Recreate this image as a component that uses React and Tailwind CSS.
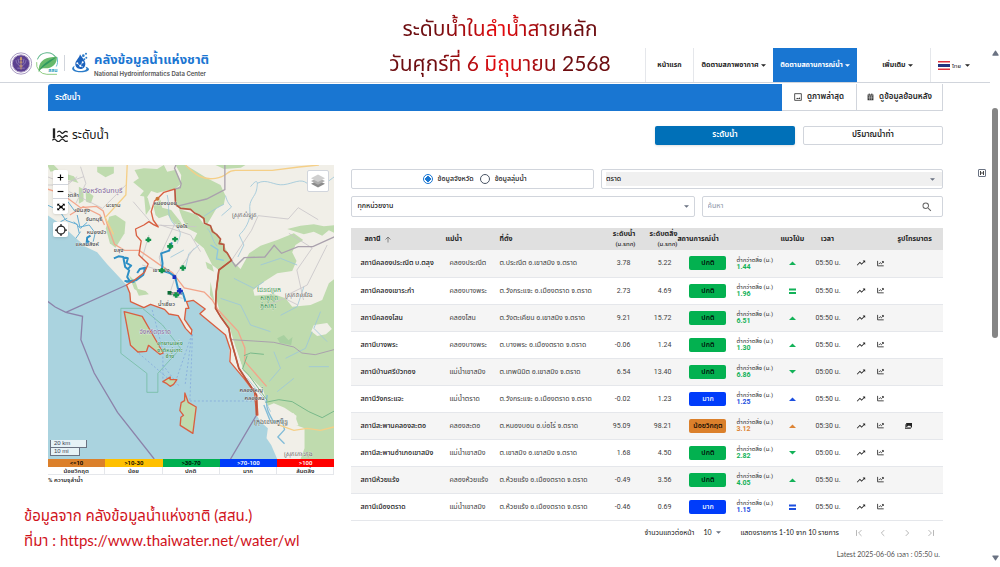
import { useState } from "react";

const stations = [
  { name: "สถานีคลองประณีต บ.ตลุง", river: "คลองประณีต", place: "ต.ประณีต อ.เขาสมิง จ.ตราด", level: "3.78", bank: "5.22", status: "ปกติ", diff: "1.44", trend: "up", time: "05:50" },
  { name: "สถานีคลองเขาระกำ", river: "คลองบางพระ", place: "ต.วังกระแจะ อ.เมืองตราด จ.ตราด", level: "2.73", bank: "4.69", status: "ปกติ", diff: "1.96", trend: "same", time: "05:50" },
  { name: "สถานีคลองโสน", river: "คลองโสน", place: "ต.วังตะเคียน อ.เขาสมิง จ.ตราด", level: "9.21", bank: "15.72", status: "ปกติ", diff: "6.51", trend: "up", time: "05:50" },
  { name: "สถานีบางพระ", river: "คลองบางพระ", place: "ต.บางพระ อ.เมืองตราด จ.ตราด", level: "-0.06", bank: "1.24", status: "ปกติ", diff: "1.30", trend: "up", time: "05:50" },
  { name: "สถานีบ้านศรีบัวทอง", river: "แม่น้ำเขาสมิง", place: "ต.เทพนิมิต อ.เขาสมิง จ.ตราด", level: "6.54", bank: "13.40", status: "ปกติ", diff: "6.86", trend: "down", time: "05:00" },
  { name: "สถานีวังกระแจะ", river: "แม่น้ำตราด", place: "ต.วังกระแจะ อ.เมืองตราด จ.ตราด", level: "-0.02", bank: "1.23", status: "มาก", diff: "1.25", trend: "up", time: "05:50" },
  { name: "สถานีสะพานคลองสะตอ", river: "คลองสะตอ", place: "ต.หนองบอน อ.บ่อไร่ จ.ตราด", level: "95.09", bank: "98.21", status: "น้อยวิกฤต", diff: "3.12", trend: "up", time: "05:30", photo: true },
  { name: "สถานีสะพานอำเภอเขาสมิง", river: "แม่น้ำเขาสมิง", place: "ต.เขาสมิง อ.เขาสมิง จ.ตราด", level: "1.68", bank: "4.50", status: "ปกติ", diff: "2.82", trend: "down", time: "05:00" },
  { name: "สถานีห้วยแร้ง", river: "คลองห้วยแร้ง", place: "ต.ห้วยแร้ง อ.เมืองตราด จ.ตราด", level: "-0.49", bank: "3.56", status: "ปกติ", diff: "4.05", trend: "up", time: "05:50" },
  { name: "สถานีเมืองตราด", river: "แม่น้ำเขาสมิง", place: "ต.ห้วยแร้ง อ.เมืองตราด จ.ตราด", level: "-0.46", bank: "0.69", status: "มาก", diff: "1.15", trend: "same", time: "05:50" },
];

const statusStyles = {
  "ปกติ": { badge: "bg-[#03b150] text-black", text: "text-[#13b258]" },
  "มาก": { badge: "bg-[#003cfa] text-white", text: "text-[#1c4fe0]" },
  "น้อยวิกฤต": { badge: "bg-[#db802b] text-black", text: "text-[#dd8434]" },
};

const legend = [
  { range: "<=10", label: "น้อยวิกฤต", color: "bg-[#db802b] text-black" },
  { range: ">10-30", label: "น้อย", color: "bg-[#ffc000] text-black" },
  { range: ">30-70", label: "ปกติ", color: "bg-[#00b050] text-black" },
  { range: ">70-100", label: "มาก", color: "bg-[#003cfa] text-white" },
  { range: ">100", label: "ล้นตลิ่ง", color: "bg-[#ff0000] text-white" },
];

function Caret({ className = "" }) {
  return (
    <svg viewBox="0 0 10 5" className={`w-[5px] h-[3px] shrink-0 ${className}`} fill="currentColor" aria-hidden="true">
      <path d="M0 0h10L5 5z" />
    </svg>
  );
}

function ScrollArrow({ className = "" }) {
  return (
    <svg viewBox="0 0 8 6" className={`w-[7px] h-[6px] ${className}`} fill="currentColor" aria-hidden="true">
      <path d="M1 0h6q1 0 .5 1L4.500 5.500q-.5.5-1 0L.5 1Q0 0 1 0z" />
    </svg>
  );
}

function Logos() {
  return (
    <div className="flex items-center gap-1">
      <svg viewBox="0 0 66 68" className="w-[22px] h-[23px]" aria-hidden="true">
        <circle cx="33" cy="34" r="32" fill="#fff" stroke="#7d6aa5" strokeWidth="2" />
        <circle cx="33" cy="34" r="26" fill="#5b4090" stroke="#b9a8cc" strokeWidth="3" />
        <path d="M18 24c2 12 8 16 15 17 7-1 13-5 15-17M24 20l3 14M42 20l-3 14M22 48h22" fill="none" stroke="#8d79b8" strokeWidth="3" />
        <path d="M33 14v38M29 30h8M28 42h10M30 22l3-7 3 7z" fill="none" stroke="#c99a6c" strokeWidth="3" />
      </svg>
      <svg viewBox="0 0 68 68" className="w-[23px] h-[23px]" aria-hidden="true">
        <path d="M60 18A31 31 0 0 0 4 22" fill="none" stroke="#5db58a" strokeWidth="3" />
        <path d="M2 30a31 31 0 0 0 30 36h30" fill="none" stroke="#7cc46c" strokeWidth="2.5" />
        <path d="M62 15c3 12 2 20-2 28" fill="none" stroke="#4fb0c4" strokeWidth="2.5" />
        <path d="M8 50C10 24 30 14 62 14c0 26-18 36-40 34C16 48 12 50 8 60z" fill="#67b96b" />
        <path d="M8 58C16 40 32 26 60 15 40 34 24 38 8 58z" fill="#2f9860" />
        <text x="36" y="59" className="text-[15px] font-bold" fill="#2c9fc0">สสน</text>
      </svg>
      <span className="h-4 ml-px border-l border-gray-300" />
      <svg viewBox="0 0 60 64" className="w-5 h-[22px] ml-px" aria-hidden="true">
        <path d="M14 40C3 46 4 54 18 58c16 4 38 2 39-7 0-4-5-7-11-8 10 8-4 13-15 13-14 0-23-6-17-16z" fill="#2b7cc9" />
        <path d="M30 6c4 8 16 18 16 29 0 9-7 15-15 15s-15-6-15-14C16 24 28 18 30 6z" fill="#1c62bd" />
        <path d="M22 33l8 7 8-9M30 40l9 4" fill="none" stroke="#fff" strokeWidth="2" />
        <g fill="#fff">
          <circle cx="22" cy="33" r="3" />
          <circle cx="38" cy="30" r="3" />
          <circle cx="31" cy="41" r="3" />
        </g>
        <g fill="#2b7cc9">
          <circle cx="40" cy="10" r="4" />
          <circle cx="49" cy="16" r="3" />
          <circle cx="48" cy="4" r="3" />
          <circle cx="43" cy="21" r="3" />
        </g>
      </svg>
    </div>
  );
}

function Header() {
  return (
    <header className="grid grid-cols-[1fr_auto_1fr] items-end pl-[10px] border-b border-gray-300">
      <a href="#home" className="flex items-center gap-1 h-[38px]">
        <Logos />
        <span className="flex flex-col pt-1 gap-px">
          <span className="text-[13px] leading-4 font-bold text-[#1b76d2] whitespace-nowrap">คลังข้อมูลน้ำแห่งชาติ</span>
          <span className="font-['Inter',sans-serif] text-[6px] leading-[9px] font-semibold text-neutral-600 whitespace-nowrap">National Hydroinformatics Data Center</span>
        </span>
      </a>
      <h1 className="pt-[10px] pb-[2px] text-center font-['Lato','Noto_Sans_Thai',sans-serif] text-[21px] leading-[35px] whitespace-nowrap">
        <span className="block bg-[linear-gradient(90deg,#6d0d10_20%,#e80a0e_50%,#6d0d10_80%)] bg-clip-text text-transparent">ระดับน้ำในลำน้ำสายหลัก</span>
        <span className="block bg-[linear-gradient(90deg,#6d0d10_20%,#e80a0e_50%,#6d0d10_80%)] bg-clip-text text-transparent">วันศุกร์ที่ 6 มิถุนายน 2568</span>
      </h1>
      <nav className="flex justify-end h-[34px] pr-3 text-[7px] font-bold text-neutral-800 whitespace-nowrap">
        <a href="#home" className="flex items-center justify-center w-12 border-l border-gray-200">หน้าแรก</a>
        <button className="flex items-center justify-center gap-[2px] w-20 border-l border-gray-200">ติดตามสภาพอากาศ <Caret /></button>
        <button className="flex items-center justify-center gap-[2px] w-[84px] bg-[#1976d2] text-white">ติดตามสถานการณ์น้ำ <Caret /></button>
        <button className="flex items-center justify-center gap-[2px] w-[73px] pl-2">เพิ่มเติม <Caret /></button>
        <button className="flex items-center gap-[2px] w-12 pl-[7px] border-l border-gray-200 text-[6px] font-normal">
          <svg viewBox="0 0 12 9" className="w-3 h-[9px]" aria-hidden="true">
            <path d="M0 0h12v9H0z" fill="#e0313c" />
            <path d="M0 1.500h12v6H0z" fill="#fff" />
            <path d="M0 3h12v3H0z" fill="#24327f" />
          </svg>
          ไทย
          <Caret className="ml-[2px]" />
        </button>
      </nav>
    </header>
  );
}

const land = "M0 150L30 170 70 205 115 245 150 262 180 298 215 335 238 360 248 385 250 410 290 428 310 418 352 433 365 447 393 452 415 490 432 508 434 495 412 463 416 430 425 430 418 410 438 406 474 432 458 446 535 510 550 555 548 590 622 682 628 750 640 770 662 790 658 820 672 840 690 882H864V0H0Z";
const border = "M383 72L350 82 332 100 322 108 312 140 318 165 333 186 318 178 305 170 290 180 265 192 268 212 282 228 275 270 303 297 292 322 262 345 238 360 248 385 250 410 290 428 310 418 352 433 365 447 393 452 415 490 432 508 434 495 412 463 416 430 425 430 418 410 438 406 474 432 458 446 535 510 550 555 548 590 590 640 622 682 628 750 632 750 628 690 575 610 550 520 545 490 520 455 505 430 507 380 515 315 553 286";
const eastBorder = "M383 72L385 118 400 130 430 133 442 144 455 150 470 160 472 175 490 182 496 200 508 208 520 222 516 236 530 238 530 256 540 264 553 286 515 315 507 380 505 430 520 455 545 490 550 520 575 610 628 690V750";

function RiverMap() {
  return (
    <svg viewBox="0 0 864 882" preserveAspectRatio="xMidYMid slice" className="block w-full h-[294px]" role="img" aria-label="แผนที่จังหวัดตราด">
      <path d="M0 0H864V882H0z" fill="#aad3df" />
      <path d={land} fill="#f1efe8" />
      <g fill="#bfdbae">
        <path d="M262 15L275 40 258 52 290 78 278 92 300 96 312 78 330 84 352 78 383 72 402 56 386 14 360 20 350 0 330 12 290 10z" />
        <path d="M385 0L402 30 400 60 385 75V118L400 130 430 133 455 150 480 178 508 130 530 118 535 92 520 60 480 40 440 15 415 0z" />
        <path d="M395 132L450 150 470 178 490 182 530 240 553 286 515 315 495 300 470 250 440 225 450 205 420 190 405 160z" />
        <path d="M186 155L205 150 235 170 232 205 205 248 188 235 176 190z" />
        <path d="M515 315L553 286 580 312 606 265 640 242 690 225 740 205 768 225 745 240 735 262 748 288 735 318 690 325 650 350 618 375 622 392 680 388 715 400 735 425 790 420 825 405 845 355 864 340V882H760L772 850 772 790 745 780 748 752 712 728 680 715 655 725 640 680 590 620 565 545 548 490 520 450 507 400z" />
        <path d="M864 180L830 184 800 178 760 182 720 192 770 208 800 200 825 212 845 196 864 205z" />
        <path d="M318 120L340 104 345 128 372 135 400 170 410 190 380 175 362 150 335 160 325 150z" />
        <path d="M150 5h50v20l-25 12-25-16zM95 65l14 8v35l-14 8zM115 75l24 18-8 22-14-5zM290 85l12 15 8 30-14 20zM0 0h20l14 14-24 6zM40 22l40 12 14 20-20-6-30-8zM245 330l20 20 10 30-14-8zM265 370l30 8 10 10-30 4zM490 350l12 60-14-20zM475 290l20 10 5 20-20-10z" />
        <path d="M505 0h90l-14 8-50 4z" />
      </g>
      <g fill="#f1efe8">
        <path d="M800 480l40-6 14 18-18 16-26 5-18-14zM548 525l20 30 20 60 60 60 12 40 5 40-34-6-10-70-75-95z" />
        <path d="M700 750l40-5 14 36-34 8z" />
      </g>
      <path d="M690 520l20-10 14 16 12-10-4 24-34-6z" fill="#a8d0a0" />

      {/* minor rivers and roads */}
      <g fill="none" stroke="#9cc7da" strokeWidth="2.500">
        <path d="M530 118c-30 15-50 30-60 36M535 92c5 20 12 26 18 34l-30 26M610 65c24-30 22-10 18 10s-24 30-20 60-15 60-32 75l14 30-18 36M630 55c30-16 50 8 80 4s50-20 70-4 40 14 84-22M360 90c10 40-5 60 22 90 30 22 12 40 8 56M480 190c18 20 12 34 30 54M410 255l-40 22M455 240l-30 26-12 50M770 365l-20 60-50 26M680 560l20 50-34 40M785 605h60M600 640l50 60 20 40M740 640l-50 40M795 500l-20 50-60 30M560 340l60 30 30-20M640 300l60-20 50 20M520 400l60 20 30 60 60 20M820 440l-20 50 40 40" />
        <path d="M0 120l36 16 20 30 34 12 6 26M90 150l8 36 28-6 18 24-6 26M80 170l20 20 20-18M60 160l-20 10M100 200l-14 20M62 110l22 30" stroke="#64aed4" strokeWidth="3" />
        <path d="M660 690c-8 40 8 60 20 82l24-8 8 30-20 22 20 20M650 720l20 50" stroke="#82bcd8" strokeWidth="4" />
        <path d="M490 240l22 14-4 28 22 4" stroke="#8fc7dd" strokeWidth="4" />
      </g>
      <g fill="none" stroke="#c9c5c9" strokeWidth="2.500">
        <path d="M553 286l60-90 20-44 90 10 30-34 60 36M725 205l70 44-46 66 20 90M0 60l60 0 30-25M66 80l100 50 70-70M305 210l-20 70M386 170l-50 106 10 44M440 250l-54 80-20 60 40 10M100 5l16 50-30 60M258 110l60 70 130 5M285 300l100 30M720 390l60-30 60-120M752 420l-40-20-50 20M340 180l90 30 30 50M0 35l50 20 60-20" />
      </g>
      <g fill="none" stroke="#f2a58b" strokeWidth="4">
        <path d="M0 72l40 12 60 44 48-4 20 14 12 40 22 60 30 18 44 0 60 42 40 25 35 46 60 12 24 24 18 30 60 64 20 50 0 40 65 75" />
        <path d="M68 150l40-25 50 25 14 30" />
        <path d="M240 0l-4 90-62 68 25 50" stroke="#f5cf87" />
        <path d="M415 0c30 30 50 46 90 40 40-6 30-24 60-24h110l80-10 60-6" stroke="#f5cf87" />
        <path d="M690 778l50 18 40-6 40 6 40-10" stroke="#f5cf87" />
      </g>
      <g fill="none" stroke="#aaa1ad" strokeWidth="4">
        <path d="M386 0l-4 10 20 46-3 12-16 4M388 124l90-22 55-28V0M553 286l12 18 26-26 62-2 28-35 22 24 50-20 44 0 65-30" />
        <path d="M552 524l68 4 60 4 60 14 24 18 40 5 60-16" strokeWidth="3" />
      </g>
      <path d="M655 712l40-8 40 6 50 30 40 18 40-22M590 572l20-8 40 4M600 572l-14 40 20 20 54 74" fill="none" stroke="#79b98a" strokeWidth="3" />

      {/* maritime boundaries, park limits, ferries */}
      <path d="M0 408l24 18 32 16 50 12-5 70 40 100 70 118 110 140M56 442l182-82M628 750l-78 132" fill="none" stroke="#8c83aa" strokeWidth="4" />
      <path d="M221 565V430h65l60 50 54 70-68 75v57h-33v-57z" fill="none" stroke="#74bda3" strokeWidth="3" opacity=".8" />
      <path d="M315 435l32 120 0 100M275 565l110 95M434 508l-50 145M436 508l-8 200M434 508l-20 150M347 600l50 65M428 708h198" fill="none" stroke="#86acdc" strokeWidth="2.500" strokeDasharray="6 6" />

      {/* main rivers */}
      <g fill="none" stroke="#2d8fc5" strokeWidth="6" strokeLinejoin="round">
        <path d="M374 232l-8 25-24 8 4 30-2 22 22 6 18 12 8 35 15 14 8 26" />
        <path d="M200 280l14-6 14 2 6 30 12 10-6 20 10 16M226 276l16 4-4 14 14 8-10 10M236 350l30-4 22-16 6-22-16 4-8 12M262 350l-30-2" />
        <path d="M130 212l-10 6-2 20M118 226l8 6" />
      </g>

      <g fill="#bfdbae" stroke="#d95f41" strokeWidth="4" strokeLinejoin="round">
        <path d="M231 440l54 14 32 56 31 54-10 4-34-27-6 18-26 2-22-20z" />
        <path d="M347 650l22-14v8h20l-10 14-10 6-10-8z" />
        <path d="M413 684l10 28 24 14-10 79-38-24 2-24 8-6-11-14 4-24 10-6z" />
      </g>
      <path d={border} fill="none" stroke="#d95f41" strokeWidth="4" strokeLinejoin="round" />
      <path d={eastBorder} fill="none" stroke="#b8563f" strokeWidth="5" strokeLinejoin="round" />
      <circle cx="331" cy="101" r="6" fill="#c9783a" />

      <g className="text-[17px] font-medium" fill="#444" textAnchor="middle" stroke="#fff" strokeWidth="1" paintOrder="stroke">
        <text x="166" y="83" className="text-[21px]" fill="#8e75a3">จังหวัดจันทบุรี</text>
        <text x="72" y="95">วงตล้า</text>
        <text x="198" y="126">มะขาม</text>
        <text x="105" y="140">เนินสูง</text>
        <text x="140" y="168">จันทบุรี</text>
        <text x="148" y="207">หนองบัว</text>
        <text x="120" y="243">แหลมสิงห์</text>
        <text x="214" y="262">ขลุง</text>
        <text x="354" y="120">หนองบอน</text>
        <text x="404" y="188">บ่อไร่</text>
        <text x="342" y="322">เขาสมิง</text>
        <text x="386" y="390">ตราด</text>
        <text x="358" y="424">น้ำเชี่ยว</text>
        <text x="592" y="156">ស្រុកសំឡូត</text>
        <text x="756" y="396">ស្រុកវាលវែង</text>
        <text x="324" y="507" className="text-[19px]" fill="#8e75a3">จังหวัดตราด</text>
        <text x="612" y="682">คลองใหญ่</text>
        <text x="622" y="705">คลองสน</text>
        <text x="670" y="778" className="text-[19px]">ក្រុងខេមរភូមិន្ទ</text>
        <text x="754" y="873">ស្រុកកោះកុង</text>
        <g fill="#2f8844">
          <text x="368" y="541">อุทยานแห่ง</text>
          <text x="368" y="560">ชาติหมู่เกาะ</text>
          <text x="368" y="579">ช้าง</text>
          <text x="664" y="380" className="text-[19px]">ដែនជម្រក</text>
          <text x="664" y="404" className="text-[19px]">សត្វព្រៃ</text>
          <text x="664" y="428" className="text-[19px]">ភ្នំសំកុះ</text>
        </g>
      </g>

      {/* stations */}
      <g fill="#11934a" transform="translate(-24 -15)">
        <path d="M324 232h7v4h5v7h-5v4h-7v-4h-5v-7h5zM404 230h7v4h5v7h-5v4h-7v-4h-5v-7h5zM389 250h8v5h5v8h-5v4h-8v-4h-5v-8h5zM364 324h8v4h5v8h-5v4h-8v-4h-5v-8h5zM427 316h8v4h5v7h-5v5h-8v-5h-5v-7h5zM407 397h8v4h5v8h-5v4h-8v-4h-5v-8h5z" />
        <path d="M385 393h12v11h-12z" fill="#0b6b35" />
      </g>
      <path d="M376 331h11v11h-11zM394 369h8v5h5v7h-5v5h-8v-5h-5v-7h5z" fill="#1a2fc0" />
    </svg>
  );
}

function MapPanel() {
  return (
    <section className="w-[32%] shrink-0 text-[7px] text-neutral-800">
      <div className="relative">
        <RiverMap />
        <div className="absolute left-[5px] top-[5px] flex flex-col gap-2">
          <div className="flex flex-col w-[15px] rounded-[2px] bg-white divide-y divide-gray-300 shadow">
            <button aria-label="ขยาย" className="flex items-center justify-center h-[15px]">
              <svg viewBox="0 0 12 12" className="w-[7px] h-[7px]" stroke="#000" strokeWidth="2">
                <path d="M1 6h10M6 1v10" />
              </svg>
            </button>
            <button aria-label="ย่อ" className="flex items-center justify-center h-[14px]">
              <svg viewBox="0 0 12 12" className="w-[7px] h-[7px]" stroke="#000" strokeWidth="2">
                <path d="M1 6h10" />
              </svg>
            </button>
            <button aria-label="เต็มจอ" className="flex items-center justify-center h-[15px]">
              <svg viewBox="0 0 24 24" className="w-[10px] h-[10px]" fill="#000">
                <path d="M3 4h6L7 6l3 3h4l3-3-2-2h6v6l-2-2-3 2v4l3 2 2-2v6h-6l2-2-3-3h-4l-3 3 2 2H3v-6l2 2 3-2v-4L5 8l-2 2z" />
              </svg>
            </button>
          </div>
          <button aria-label="ตำแหน่งของฉัน" className="flex items-center justify-center w-[15px] h-[15px] rounded-[2px] bg-white shadow">
            <svg viewBox="0 0 24 24" className="w-3 h-3" stroke="#222" strokeWidth="2.500" fill="none">
              <circle cx="12" cy="12" r="8" />
              <path d="M12 0v5M12 19v5M0 12h5M19 12h5" />
            </svg>
          </button>
        </div>
        <button aria-label="ชั้นข้อมูล" className="absolute right-[5px] top-[5px] flex items-center justify-center w-[22px] h-[22px] rounded-[2px] border border-gray-300 bg-white">
          <svg viewBox="0 0 26 26" className="w-[14px] h-[14px]">
            <path d="M13 12L26 18 13 25 0 18z" fill="#8b8b8b" />
            <path d="M13 7L26 13 13 20 0 13z" fill="#adadad" />
            <path d="M13 1L26 8 13 15 0 8z" fill="#cfcfcf" />
          </svg>
        </button>
        <div className="absolute left-[2px] bottom-[3px] font-['Liberation_Sans',sans-serif] text-[6px] leading-[7px] text-gray-700">
          <div className="w-[37px] h-2 pl-[3px] border border-t-0 border-gray-500 bg-white/70">20 km</div>
          <div className="w-[30px] h-2 pl-[3px] border border-t-0 border-gray-500 bg-white/70">10 mi</div>
        </div>
      </div>
      <ul className="grid grid-cols-5 text-center font-semibold">
        {legend.map((item) => (
          <li key={item.range}>
            <div className={`h-2 text-[6px] leading-2 ${item.color}`}>{item.range}</div>
            <div className="h-2 leading-2 border-b border-r border-gray-200 text-[6px]">{item.label}</div>
          </li>
        ))}
      </ul>
      <p className="text-[6px] leading-[10px] font-semibold">% ความจุลำน้ำ</p>
    </section>
  );
}

function Filters() {
  const [mode, setMode] = useState("province");
  const radio = "appearance-none w-[10px] h-[10px] rounded-full border border-gray-600 checked:border-[#1976d2] checked:bg-[radial-gradient(circle,#1976d2_45%,transparent_50%)]";
  return (
    <div className="flex flex-col gap-[7px] text-[7px] font-medium text-neutral-900">
      <div className="flex gap-[7px]">
        <fieldset className="flex items-center justify-center gap-[6px] basis-[41%] h-5 pl-1 rounded-[2px] border border-gray-300">
          <label className="flex items-center gap-[5px]">
            <input type="radio" name="mode" className={radio} checked={mode === "province"} onChange={() => setMode("province")} />
            ข้อมูลจังหวัด
          </label>
          <label className="flex items-center gap-[5px]">
            <input type="radio" name="mode" className={radio} checked={mode === "basin"} onChange={() => setMode("basin")} />
            ข้อมูลลุ่มน้ำ
          </label>
        </fieldset>
        <div className="flex-1 h-5 py-[2px] pl-1 rounded-[2px] border border-gray-300">
          <div className="flex items-center h-full pr-[7px] bg-[#f0f0f0]">
            <select aria-label="จังหวัด" className="flex-1 appearance-none outline-none">
              <option>ตราด</option>
            </select>
            <Caret className="text-gray-500" />
          </div>
        </div>
      </div>
      <div className="flex gap-[7px]">
        <div className="basis-[58%] flex items-center h-[21px] px-[5px] rounded-[2px] border border-gray-300">
          <select aria-label="หน่วยงาน" className="flex-1 appearance-none outline-none">
            <option>ทุกหน่วยงาน</option>
          </select>
          <Caret className="text-gray-500" />
        </div>
        <div className="flex-1 flex items-center h-[21px] pl-[5px] pr-[9px] rounded-[2px] border border-gray-300">
          <input aria-label="ค้นหา" placeholder="ค้นหา" className="flex-1 min-w-0 outline-none placeholder-gray-400" />
          <svg viewBox="0 0 24 24" className="w-3 h-3" fill="#666" aria-hidden="true">
            <path d="M15.500 14h-.79l-.28-.27A6.470 6.470 0 0 0 16 9.500 6.500 6.500 0 1 0 9.500 16c1.610 0 3.090-.59 4.230-1.570l.27.28v.79l5 4.990L20.490 19zm-6 0C7.010 14 5 11.990 5 9.500S7.010 5 9.500 5 14 7.010 14 9.500 11.990 14 9.500 14" />
          </svg>
        </div>
      </div>
    </div>
  );
}

function Trend({ trend }) {
  return (
    <svg viewBox="0 0 8 8" className="w-2 h-2 mx-auto" fill="currentColor" role="img" aria-label={trend}>
      {trend === "up" && <path d="M1 6l3.500-3.500L8 6z" />}
      {trend === "down" && <path d="M1 2l3.500 3.500L8 2z" />}
      {trend === "same" && <path d="M1 1.500h7v2H1zM1 5h7v2H1z" />}
    </svg>
  );
}

function StationRow({ station }) {
  const style = statusStyles[station.status];
  return (
    <tr className="h-[27px] border-b border-gray-200 odd:bg-[#f5f5f5]">
      <td className="pl-[9px] font-medium text-neutral-900">{station.name}</td>
      <td className="pl-2">{station.river}</td>
      <td className="pl-[6px]">{station.place}</td>
      <td className="pr-[5px] text-right">{station.level}</td>
      <td className="pr-[6px] text-right">{station.bank}</td>
      <td className="pl-3">
        <span className={`block w-[37px] h-[14px] rounded-[2px] text-center text-[7px] leading-[14px] font-medium ${style.badge}`}>{station.status}</span>
      </td>
      <td className="pl-1">
        <span className="block text-[6px] leading-[7px] text-neutral-800">ต่ำกว่าตลิ่ง (ม.)</span>
        <span className={`block text-[7px] leading-2 font-bold ${style.text}`}>{station.diff}</span>
      </td>
      <td className={style.text}><Trend trend={station.trend} /></td>
      <td className="pl-[7px]">{station.time} น.</td>
      <td>
        <div className="flex items-center gap-[11px] pl-[10px]">
          <button aria-label="กราฟ">
            <svg viewBox="0 0 24 24" className="w-[10px] h-[10px]" fill="#222">
              <path d="M16 6l2.290 2.290-4.880 4.880-4-4L2 16.590 3.410 18l6-6 4 4 6.300-6.290L22 12V6z" />
            </svg>
          </button>
          <button aria-label="ภาพตัดขวาง">
            <svg viewBox="0 0 24 24" className="w-[7px] h-[7px]" fill="none" stroke="#333" strokeWidth="3">
              <path d="M2 3v17h21M6 14l5-5 4 4 7-7M17 5h5v5" />
            </svg>
          </button>
        </div>
      </td>
      <td className="pl-[15px]">
        {station.photo && (
          <button aria-label="รูปโทรมาตร" className="block">
            <svg viewBox="0 0 24 20" className="w-[7px] h-[6px]" fill="#222">
              <path d="M4 0h20v15H4zM0 4h2v13h18v2H0z" />
              <path d="M7 13l4-5 3 3 3-3 4 5z" fill="#fff" />
            </svg>
          </button>
        )}
      </td>
    </tr>
  );
}

function StationTable() {
  return (
    <table className="w-full table-fixed mt-[11px] text-[7px] leading-[10px] text-neutral-700 whitespace-nowrap">
      <colgroup>
        <col className="w-[90px]" />
        <col className="w-[52px]" />
        <col className="w-[107px]" />
        <col className="w-[35px]" />
        <col className="w-[42px]" />
        <col className="w-[55px]" />
        <col className="w-[44px]" />
        <col className="w-[32px]" />
        <col className="w-[38px]" />
        <col className="w-[44px]" />
        <col className="w-[53px]" />
      </colgroup>
      <thead className="bg-[#e0e0e0] text-neutral-800">
        <tr className="h-[22px] text-left">
          <th className="pl-[13px]">
            <span className="flex items-center gap-1">
              สถานี
              <svg viewBox="0 0 12 12" className="w-[6px] h-[7px]" fill="none" stroke="#666" strokeWidth="1.500" aria-hidden="true">
                <path d="M6 12V1M1 6l5-5 5 5" />
              </svg>
            </span>
          </th>
          <th className="pl-1">แม่น้ำ</th>
          <th className="pl-[6px]">ที่ตั้ง</th>
          <th className="text-right">ระดับน้ำ<span className="block text-[6px] font-medium">(ม.รทก)</span></th>
          <th className="text-right">ระดับตลิ่ง<span className="block text-[6px] font-medium">(ม.รทก)</span></th>
          <th>สถานการณ์น้ำ</th>
          <th />
          <th className="text-center">แนวโน้ม</th>
          <th className="text-center">เวลา</th>
          <th />
          <th className="pl-[7px]">รูปโทรมาตร</th>
        </tr>
      </thead>
      <tbody>
        {stations.map((station) => (
          <StationRow key={station.name} station={station} />
        ))}
      </tbody>
    </table>
  );
}

const pagerIcons = [
  { label: "หน้าแรก", path: "M18 5l-7 7 7 7M6 5v14" },
  { label: "ก่อนหน้า", path: "M15 5l-7 7 7 7" },
  { label: "ถัดไป", path: "M9 5l7 7-7 7" },
  { label: "หน้าสุดท้าย", path: "M6 5l7 7-7 7M18 5v14" },
];

function Pagination() {
  return (
    <div className="flex items-center justify-end h-6 pr-[6px] font-['Lato','Noto_Sans_Thai',sans-serif] text-[7px] text-neutral-900">
      <label className="flex items-center gap-[9px]">
        จำนวนแถวต่อหน้า
        <span className="flex items-center gap-1">
          <select className="appearance-none outline-none">
            <option>10</option>
          </select>
          <Caret className="text-gray-500" />
        </span>
      </label>
      <span className="ml-[19px]">แสดงรายการ 1-10 จาก 10 รายการ</span>
      <div className="flex gap-3 ml-[14px]">
        {pagerIcons.map((icon) => (
          <button key={icon.label} aria-label={icon.label}>
            <svg viewBox="0 0 24 24" className="w-3 h-[10px]" fill="none" stroke="#aaa" strokeWidth="2">
              <path d={icon.path} />
            </svg>
          </button>
        ))}
      </div>
    </div>
  );
}

export default function App() {
  return (
    <div className="flex min-h-screen bg-white font-['Roboto','Noto_Sans_Thai',sans-serif]">
      <div className="flex-1 min-w-0">
        <Header />
        <main className="pl-12 pr-[47px]">
          <div className="flex h-[27px] mt-px text-[8px] font-semibold text-neutral-800">
            <div className="flex-1 flex items-center pl-[7px] rounded-tl-[3px] bg-[#1976d2] text-white">ระดับน้ำ</div>
            <button className="flex items-center justify-center gap-[5px] w-[75px] border-r border-b border-gray-300">
              <svg viewBox="0 0 24 24" className="w-2 h-2" fill="none" stroke="#333" strokeWidth="2.500">
                <path d="M2 2h20v20H2z" />
                <path d="M6 18l4-4 3 3 3-4 3 5z" fill="#333" strokeWidth="0" />
              </svg>
              ดูภาพล่าสุด
            </button>
            <button className="flex items-center justify-center gap-[5px] w-[86px] border-r border-b border-gray-300">
              <svg viewBox="0 0 24 24" className="w-[7px] h-2" fill="#333">
                <path d="M2 3h4V0h3v3h6V0h3v3h4v20H2z" />
                <path d="M3 8h18M3 15h18M9 8v14M15 8v14" stroke="#fff" strokeWidth="1.500" />
              </svg>
              ดูข้อมูลย้อนหลัง
            </button>
          </div>

          <div className="flex items-center gap-2 mt-[14px] h-5">
            <h2 className="flex-1 flex items-center gap-1 pl-1 text-[12px] text-neutral-900">
              <svg viewBox="0 0 48 42" className="w-4 h-[14px]" fill="none" stroke="#222" strokeWidth="4" aria-hidden="true">
                <path d="M6 1v30" strokeWidth="7" />
                <path d="M1 37c5-5 8-5 12 0s8 5 12 0 8-5 12 0 7 4 10 1M16 26c4-5 7-5 11 0s6 3 9 0 7-4 11 0M16 13c4-5 7-5 11 0s6 3 9 0 7-4 11 0" />
              </svg>
              ระดับน้ำ
            </h2>
            <button className="w-[140px] h-[19px] rounded-[2px] bg-[#0070b8] text-[8px] font-semibold text-white shadow">ระดับน้ำ</button>
            <button className="w-[140px] h-[19px] rounded-[2px] border border-gray-300 text-[8px] font-semibold text-neutral-800">ปริมาณน้ำท่า</button>
          </div>

          <div className="flex gap-[17px] mt-5">
            <MapPanel />
            <section className="flex-1 min-w-0 pt-1">
              <Filters />
              <StationTable />
              <Pagination />
              <p className="pt-1 pr-[3px] text-right font-['Lato','Noto_Sans_Thai',sans-serif] text-[7px] text-neutral-600">Latest 2025-06-06 เวลา : 05:50 น.</p>
            </section>
          </div>
        </main>
        <footer className="-mt-14 pl-6 w-[340px] font-['Lato','Noto_Sans_Thai',sans-serif] text-[15px] leading-[25px] text-[#d0121b] whitespace-nowrap [font-variant-ligatures:none]">
          <p>ข้อมูลจาก คลังข้อมูลน้ำแห่งชาติ (สสน.)</p>
          <p>
            ที่มา : <a href="https://www.thaiwater.net/water/wl">https://www.thaiwater.net/water/wl</a>
          </p>
        </footer>
      </div>

      <aside className="relative flex flex-col items-center w-[10px] pt-[50px] pb-[6px] text-gray-500">
        <ScrollArrow className="rotate-180" />
        <div className="w-[6px] h-[230px] mt-[52px] rounded-full bg-[#858585]" />
        <ScrollArrow className="mt-auto" />
        <button aria-label="ย่อแถบ" className="absolute right-[14px] top-[169px] w-2 h-2 rounded-[1px] border border-gray-500">
          <svg viewBox="0 0 12 12" className="w-full h-full" stroke="#444" strokeWidth="2">
            <path d="M3 2v8M9 2v8M4 6h4" />
          </svg>
        </button>
      </aside>
    </div>
  );
}
